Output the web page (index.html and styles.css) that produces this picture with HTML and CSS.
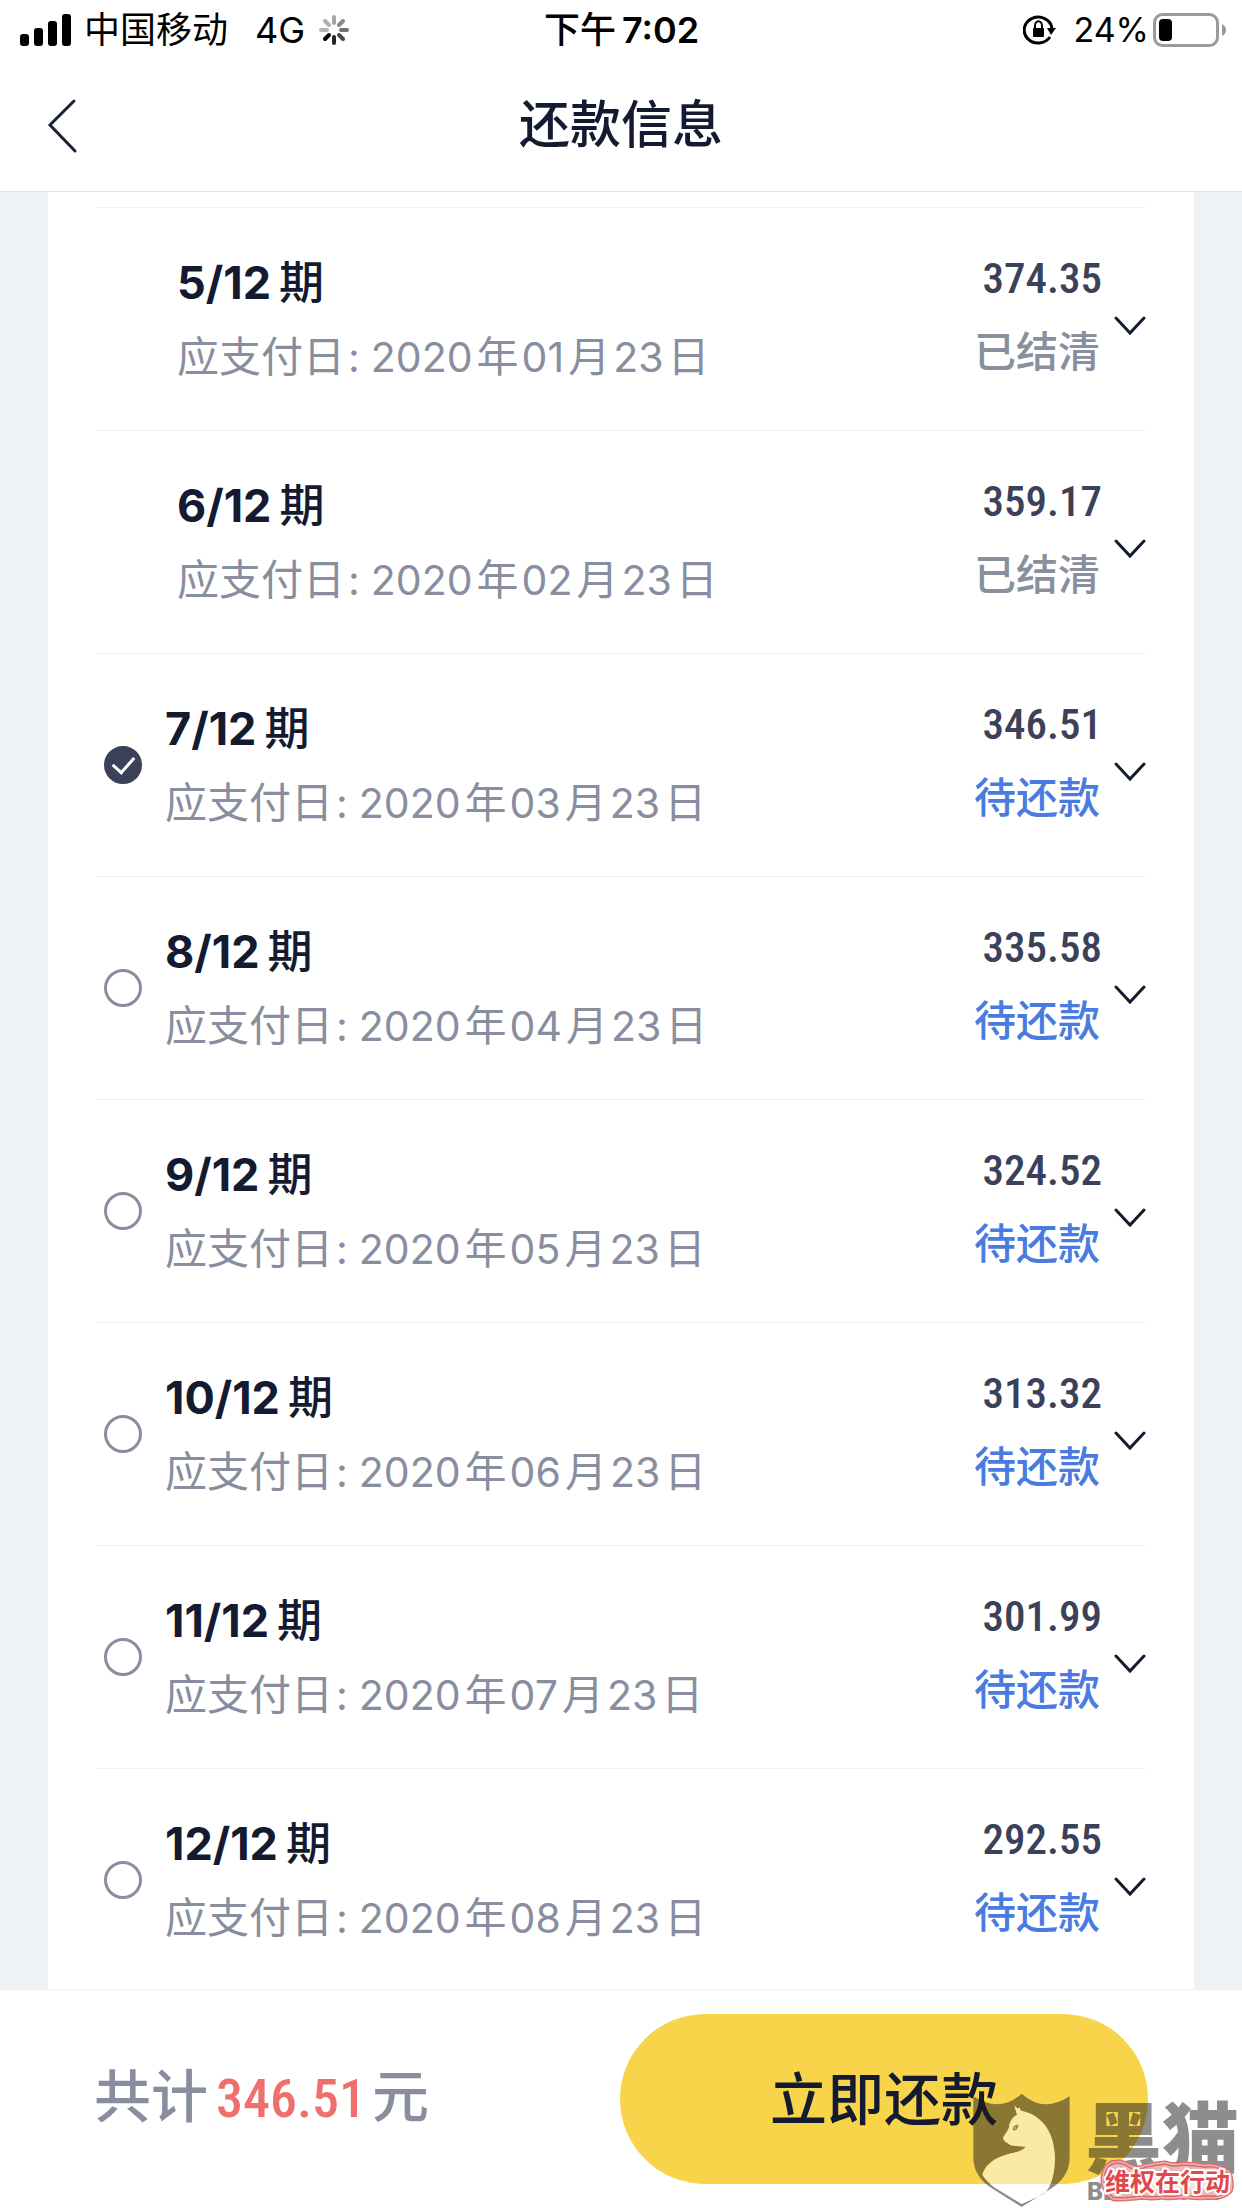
FILE: index.html
```html
<!DOCTYPE html>
<html lang="zh-CN">

<head>
    <meta charset="UTF-8">
    <meta name="viewport" content="width=device-width, initial-scale=1">
    <title>还款信息</title>
    <link rel="stylesheet" href="styles.css">
</head>

<body>
    <div class="statusBar">
        <div class="statusSide">
            <svg class="signal" width="51" height="32" viewBox="0 0 51 32">
                <rect x="0" y="20" width="9" height="12" rx="3"/>
                <rect x="14" y="14" width="9" height="18" rx="3"/>
                <rect x="28" y="7" width="9" height="25" rx="3"/>
                <rect x="42" y="0" width="9" height="32" rx="3"/>
            </svg>
            <span class="carrier">中国移动</span>
            <span class="network">4G</span>
            <svg class="spinner" width="30" height="30" viewBox="-15 -15 30 30" stroke="#000" stroke-width="4" stroke-linecap="round">
                <path d="M0 -7V-13" opacity=".35"/>
                <path d="M5 -5L9 -9" opacity=".45"/>
                <path d="M7 0H13" opacity=".55"/>
                <path d="M5 5L9 9" opacity=".7"/>
                <path d="M0 7V13" opacity=".85"/>
                <path d="M-5 5L-9 9"/>
                <path d="M-7 0H-13" opacity=".28"/>
                <path d="M-5 -5L-9 -9" opacity=".3"/>
            </svg>
        </div>
        <div class="clock"><span>下午</span>7:02</div>
        <div class="statusSide statusRight">
            <svg class="lock" width="34" height="32" viewBox="0 0 34 32">
                <path d="M27 23A14 13 0 1 1 29 14" fill="none" stroke="#000" stroke-width="3"/>
                <path d="M24 14H33L28 21Z"/>
                <rect x="10" y="14" width="11" height="9" rx="1"/>
                <path d="M12 15V12A3 4 0 0 1 19 12V15" fill="none" stroke="#000" stroke-width="2"/>
            </svg>
            <span class="percent">24%</span>
            <svg width="74" height="34" viewBox="0 0 74 34">
                <rect x="1.5" y="1.5" width="63" height="31" rx="8" fill="none" stroke="#9b9b9b" stroke-width="3"/>
                <rect x="6" y="6" width="13" height="22" rx="4"/>
                <path d="M69 11Q73 13 73 17Q73 21 69 23Z" fill="#9b9b9b"/>
            </svg>
        </div>
    </div>

    <header class="navBar">
        <button class="back" type="button" aria-label="返回">
            <svg width="32" height="56" viewBox="0 0 32 56" fill="none" stroke="#1b2137" stroke-width="3" stroke-linecap="round">
                <path d="M28 3L4 27L29 53"/>
            </svg>
        </button>
        <h1>还款信息</h1>
    </header>

    <main>
        <ul class="periods">
            <li class="period settled">
                <div class="info">
                    <span class="name"><b>5/12</b>期</span>
                    <span class="date">应支付日<i class="colon">:</i><i>2020</i>年<i>01</i>月<i>23</i>日</span>
                </div>
                <div class="money"><span class="amount">374.35</span><span class="state">已结清</span></div>
                <button class="more" type="button" aria-label="展开"><svg width="32" height="20" viewBox="0 0 32 20"><path d="M2 2L16 17L30 2"/></svg></button>
            </li>
            <li class="period settled">
                <div class="info">
                    <span class="name"><b>6/12</b>期</span>
                    <span class="date">应支付日<i class="colon">:</i><i>2020</i>年<i>02</i>月<i>23</i>日</span>
                </div>
                <div class="money"><span class="amount">359.17</span><span class="state">已结清</span></div>
                <button class="more" type="button" aria-label="展开"><svg width="32" height="20" viewBox="0 0 32 20"><path d="M2 2L16 17L30 2"/></svg></button>
            </li>
            <li class="period">
                <input type="checkbox" id="p7" checked>
                <label class="info" for="p7">
                    <span class="name"><b>7/12</b>期</span>
                    <span class="date">应支付日<i class="colon">:</i><i>2020</i>年<i>03</i>月<i>23</i>日</span>
                </label>
                <div class="money"><span class="amount">346.51</span><span class="state">待还款</span></div>
                <button class="more" type="button" aria-label="展开"><svg width="32" height="20" viewBox="0 0 32 20"><path d="M2 2L16 17L30 2"/></svg></button>
            </li>
            <li class="period">
                <input type="checkbox" id="p8">
                <label class="info" for="p8">
                    <span class="name"><b>8/12</b>期</span>
                    <span class="date">应支付日<i class="colon">:</i><i>2020</i>年<i>04</i>月<i>23</i>日</span>
                </label>
                <div class="money"><span class="amount">335.58</span><span class="state">待还款</span></div>
                <button class="more" type="button" aria-label="展开"><svg width="32" height="20" viewBox="0 0 32 20"><path d="M2 2L16 17L30 2"/></svg></button>
            </li>
            <li class="period">
                <input type="checkbox" id="p9">
                <label class="info" for="p9">
                    <span class="name"><b>9/12</b>期</span>
                    <span class="date">应支付日<i class="colon">:</i><i>2020</i>年<i>05</i>月<i>23</i>日</span>
                </label>
                <div class="money"><span class="amount">324.52</span><span class="state">待还款</span></div>
                <button class="more" type="button" aria-label="展开"><svg width="32" height="20" viewBox="0 0 32 20"><path d="M2 2L16 17L30 2"/></svg></button>
            </li>
            <li class="period">
                <input type="checkbox" id="p10">
                <label class="info" for="p10">
                    <span class="name"><b>10/12</b>期</span>
                    <span class="date">应支付日<i class="colon">:</i><i>2020</i>年<i>06</i>月<i>23</i>日</span>
                </label>
                <div class="money"><span class="amount">313.32</span><span class="state">待还款</span></div>
                <button class="more" type="button" aria-label="展开"><svg width="32" height="20" viewBox="0 0 32 20"><path d="M2 2L16 17L30 2"/></svg></button>
            </li>
            <li class="period">
                <input type="checkbox" id="p11">
                <label class="info" for="p11">
                    <span class="name"><b>11/12</b>期</span>
                    <span class="date">应支付日<i class="colon">:</i><i>2020</i>年<i>07</i>月<i>23</i>日</span>
                </label>
                <div class="money"><span class="amount">301.99</span><span class="state">待还款</span></div>
                <button class="more" type="button" aria-label="展开"><svg width="32" height="20" viewBox="0 0 32 20"><path d="M2 2L16 17L30 2"/></svg></button>
            </li>
            <li class="period">
                <input type="checkbox" id="p12">
                <label class="info" for="p12">
                    <span class="name"><b>12/12</b>期</span>
                    <span class="date">应支付日<i class="colon">:</i><i>2020</i>年<i>08</i>月<i>23</i>日</span>
                </label>
                <div class="money"><span class="amount">292.55</span><span class="state">待还款</span></div>
                <button class="more" type="button" aria-label="展开"><svg width="32" height="20" viewBox="0 0 32 20"><path d="M2 2L16 17L30 2"/></svg></button>
            </li>
        </ul>
    </main>

    <footer class="payBar">
        <p class="total">共计<span class="sum">346.51</span>元</p>
        <button class="pay" type="button">立即还款</button>
    </footer>

    <div class="watermark">
        <svg width="302" height="138" viewBox="0 0 302 138">
            <g transform="scale(.3333)">
                <path class="shield" fill-rule="evenodd" d="M100 79Q180 130 245 71Q310 130 389 79V262Q389 322 330 358L245 411L160 358Q100 322 100 262Z
                    M223 107L231 134Q208 146 206 176L189 203Q190 212 202 219Q212 229 230 228L257 230Q246 245 205 252Q140 270 127 314Q140 335 165 353L245 402L312 372C335 348 345 310 345 260C342 190 310 135 243 122L238 112L234 116Z"/>
                <path class="cat" d="M223 107L231 134Q208 146 206 176L189 203Q190 212 202 219Q212 229 230 228L257 230Q246 245 205 252Q140 270 127 314Q140 335 165 353L245 402L312 372C335 348 345 310 345 260C342 190 310 135 243 122L238 112L234 116Z"/>
                <path class="shield" d="M218 174Q222 164 235 164Q236 180 220 182ZM224 170V177L229 174Z" fill-rule="evenodd"/>
            </g>
            <text class="brand" x="145" y="97">黑猫</text>
            <text class="brandEn" x="147" y="130">BLACK CAT</text>
            <!-- red badge with a wavy ringed edge -->
            <g class="slogan">
                <path class="ring1" d="M173 98Q180 95 188 101Q197 105 206 101Q216 99 225 98Q234 101 243 99Q254 99 264 101Q275 99 285 106Q287 114 286 118Q280 124 268 122Q255 124 244 121Q233 124 222 122Q211 124 201 122Q190 124 175 124Q167 116 168 108Q169 100 173 98Z"/>
                <path class="ring2" d="M173 98Q180 95 188 101Q197 105 206 101Q216 99 225 98Q234 101 243 99Q254 99 264 101Q275 99 285 106Q287 114 286 118Q280 124 268 122Q255 124 244 121Q233 124 222 122Q211 124 201 122Q190 124 175 124Q167 116 168 108Q169 100 173 98Z"/>
                <path class="ring3" d="M173 98Q180 95 188 101Q197 105 206 101Q216 99 225 98Q234 101 243 99Q254 99 264 101Q275 99 285 106Q287 114 286 118Q280 124 268 122Q255 124 244 121Q233 124 222 122Q211 124 201 122Q190 124 175 124Q167 116 168 108Q169 100 173 98Z"/>
                <path class="ring4" d="M173 98Q180 95 188 101Q197 105 206 101Q216 99 225 98Q234 101 243 99Q254 99 264 101Q275 99 285 106Q287 114 286 118Q280 124 268 122Q255 124 244 121Q233 124 222 122Q211 124 201 122Q190 124 175 124Q167 116 168 108Q169 100 173 98Z"/>
                <text x="165" y="121">维权在行动</text>
            </g>
        </svg>
    </div>
</body>

</html>
```

FILE: styles.css
```css
* {
    box-sizing:border-box;
}
body {
    margin:0;
    height:100vh;
    display:flex;
    flex-direction:column;
    position:relative;
    background-color:#eff2f7;
    color:#141a30;
    font-family:Inter, "Noto Sans CJK SC", sans-serif;
}
button {
    padding:0;
    border:0;
    background:none;
    color:inherit;
    font-family:inherit;
}
svg {
    display:block;
}

/* phone status bar */
.statusBar {
    display:flex;
    align-items:center;
    height:60px;
    padding:0 15px 0 20px;
    background-color:white;
    color:black;
    font-size:36px;
    line-height:62px;
}
.statusSide {
    flex:1;
    display:flex;
    align-items:center;
}
.statusRight {
    justify-content:flex-end;
}
.carrier {
    margin-left:13px;
}
.network {
    margin-left:27px;
}
.spinner {
    margin-left:14px;
}
.clock {
    padding-right:4px;
    font-weight:600;
}
.clock span {
    margin-right:6px;
    font-weight:500;
}
.percent {
    margin:0 4px 0 16px;
    font-size:34px;
}

/* title bar */
.navBar {
    display:flex;
    align-items:center;
    height:132px;
    padding:0 46px;
    background-color:white;
    border-bottom:1px solid #e3e4e6;
}
.navBar h1 {
    flex:1;
    margin:0 32px 0 0;
    padding-bottom:10px;
    text-align:center;
    font-size:51px;
    font-weight:500;
}

/* instalments */
main {
    flex:1;
    min-height:0;
    padding:0 48px;
    overflow-y:auto;
    scrollbar-width:none;
}
.periods {
    margin:0;
    padding:15px 48px 0 48px;
    list-style:none;
    background-color:white;
}
.period {
    display:flex;
    align-items:center;
    height:223px;
    border-top:1px solid #eeeff2;
}
.period input {
    appearance:none;
    display:grid;
    place-content:center;
    width:38px;
    height:38px;
    margin:0 23px 0 8px;
    border:3px solid #888e9f;
    border-radius:50%;
}
.period input:checked {
    border-color:#3b4158;
    background-color:#3b4158;
}
.period input:checked::after {
    content:"";
    width:18px;
    height:10px;
    margin-bottom:6px;
    border-left:3px solid white;
    border-bottom:3px solid white;
    transform:rotate(-48deg);
}
.info {
    flex:1;
    display:flex;
    flex-direction:column;
}
.settled .info {
    padding-left:81px;
}
.name {
    font-size:45px;
    line-height:76px;
    font-weight:500;
}
.name b {
    margin-right:8px;
    font-weight:700;
}
.date {
    color:#888e9f;
    font-size:42px;
    line-height:72px;
}
.date i {
    margin:0 4px 0 3px;
    font-size:41px;
    font-style:normal;
}
.date .colon {
    margin-right:8px;
}
.money {
    display:flex;
    flex-direction:column;
    align-items:flex-end;
    margin-right:12px;
    padding-bottom:6px;
}
.amount {
    color:#3b4158;
    font-family:"Roboto Condensed", "Liberation Sans Narrow", Roboto, sans-serif;
    font-size:43px;
    font-weight:500;
    line-height:72px;
}
.state {
    margin-right:2px;
    color:#4a7be0;
    font-size:42px;
    font-weight:500;
    line-height:76px;
}
.settled .state {
    color:#888f9d;
}
.more {
    padding-top:14px;
}
.more path {
    fill:none;
    stroke:#141a30;
    stroke-width:3;
    stroke-linecap:round;
}

/* total and pay button */
.payBar {
    display:flex;
    align-items:center;
    justify-content:space-between;
    height:219px;
    padding:0 94px;
    background-color:white;
    border-top:1px solid #eff2f7;
}
.total {
    margin:0;
    padding-bottom:14px;
    color:#888e9f;
    font-size:57px;
    font-weight:500;
}
.sum {
    margin:0 6px 0 8px;
    color:#ed706c;
    font-family:"Roboto Condensed", "Liberation Sans Narrow", Roboto, sans-serif;
    font-size:54px;
}
.pay {
    width:528px;
    height:170px;
    padding-bottom:8px;
    border-radius:85px;
    background-color:#f7d44a;
    font-size:57px;
    font-weight:500;
}

/* watermark over the corner */
.watermark {
    position:absolute;
    right:0;
    bottom:0;
    pointer-events:none;
}
.shield {
    fill:rgba(30, 25, 27, .5);
}
.cat {
    fill:rgba(255, 255, 255, .5);
}
.brand {
    fill:rgba(30, 25, 27, .5);
    font-size:77px;
    font-weight:900;
}
.brandEn {
    fill:rgba(30, 25, 27, .5);
    font-size:24px;
    font-weight:800;
}
.slogan path {
    fill:#f6e4e2;
    stroke-linejoin:round;
}
.slogan .ring1 {
    stroke:#e07070;
    stroke-width:15px;
}
.slogan .ring2 {
    stroke:#f0b4b0;
    stroke-width:12px;
}
.slogan .ring3 {
    stroke:#d66a6a;
    stroke-width:9px;
}
.slogan .ring4 {
    stroke:#e8b8b5;
    stroke-width:6px;
}
.slogan text {
    fill:#e2474b;
    stroke:white;
    stroke-width:4px;
    stroke-linejoin:round;
    paint-order:stroke;
    font-size:25px;
    font-weight:700;
}
```
